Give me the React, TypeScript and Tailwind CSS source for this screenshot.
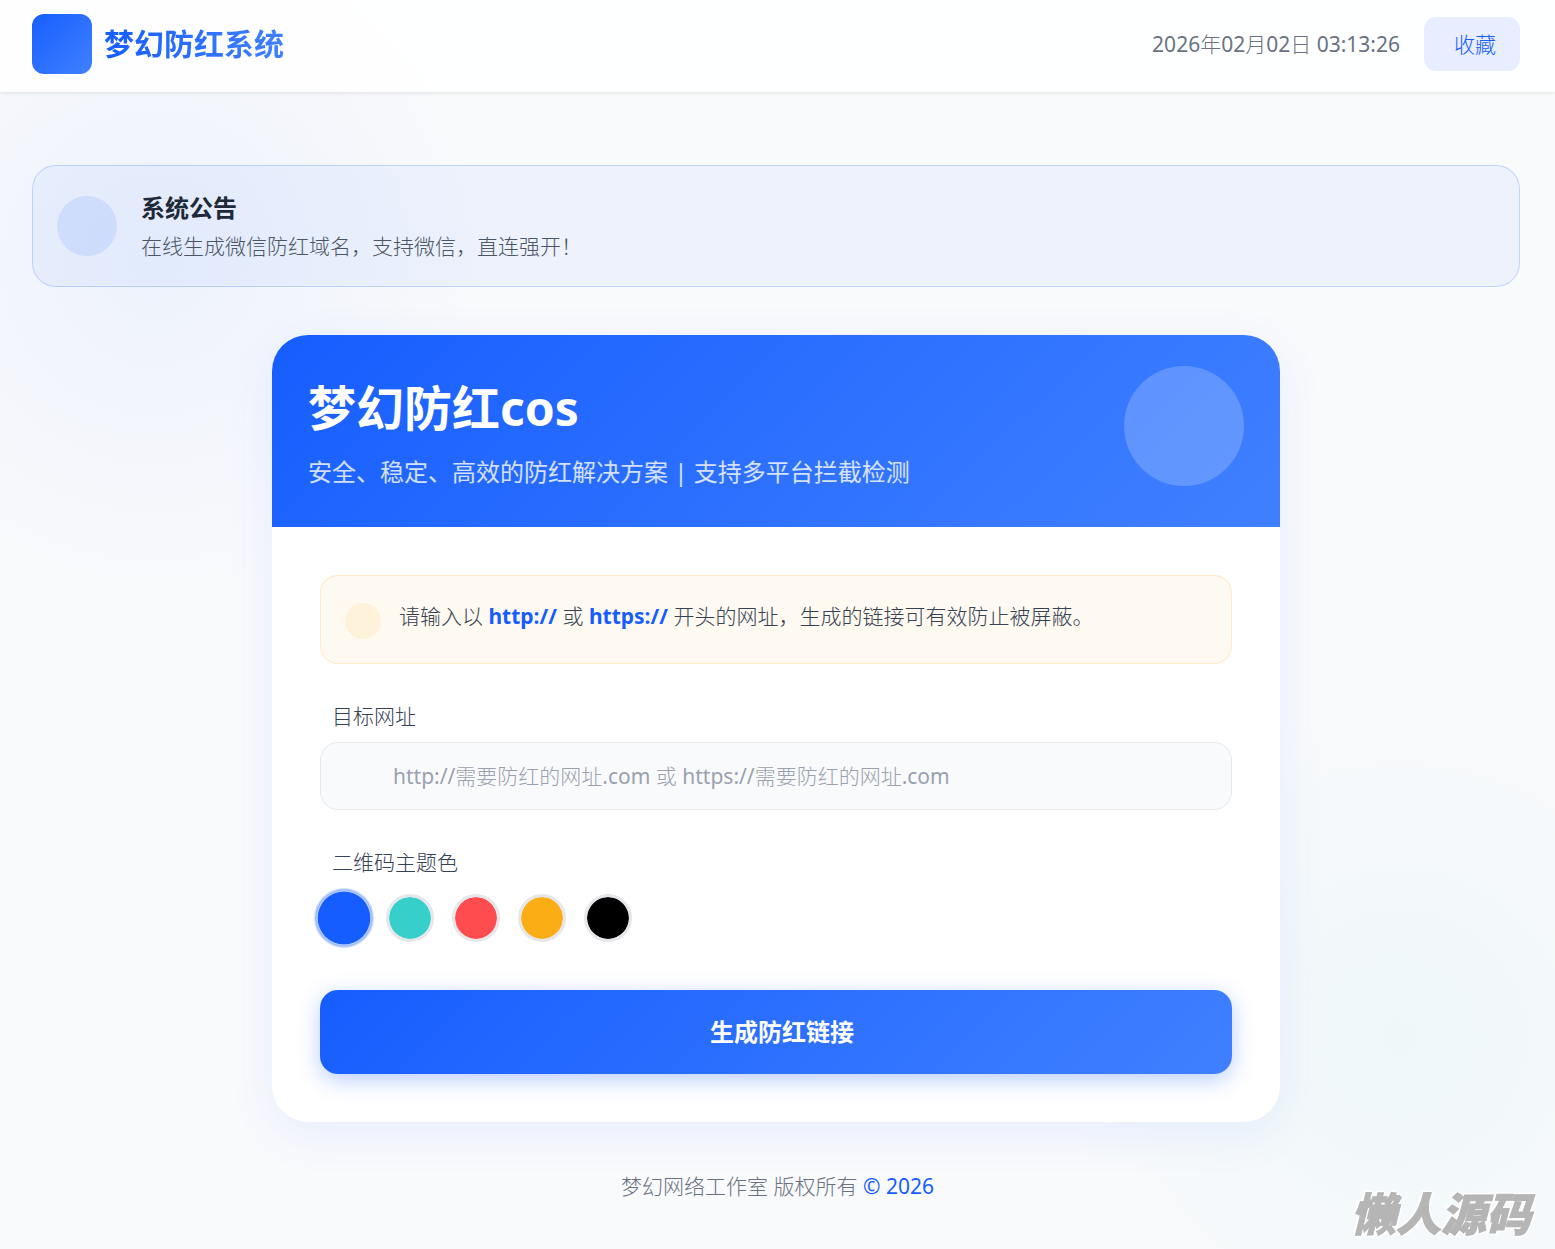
import React, { useState } from "react";
import { clsx } from "clsx";

interface ThemeColor {
  value: string;
  label: string;
  fill: string;
}

const themeColors: ThemeColor[] = [
  { value: "#165DFF", label: "蓝色", fill: "bg-[#165dff]" },
  { value: "#36CFC9", label: "青色", fill: "bg-[#36cfc9]" },
  { value: "#FF4D4F", label: "红色", fill: "bg-[#ff4d4f]" },
  { value: "#FAAD14", label: "橙色", fill: "bg-[#faad14]" },
  { value: "#000000", label: "黑色", fill: "bg-black" },
];

// Headings use the regular CJK family, body copy inherits the light one from the root
const headingFont = "font-['Noto_Sans','Noto_Sans_CJK_SC',sans-serif]";

const Header: React.FC = () => (
  <header className="bg-white/90 shadow-[0_1px_4px_rgba(0,0,0,0.1)]">
    <div className="flex items-center justify-between pt-[14px] pr-[35px] pb-[18px] pl-8">
      <div className="flex items-center gap-3">
        <div className="size-[60px] rounded-xl bg-linear-135 from-[#165dff] to-[#4080ff]" />
        <span
          className={clsx(
            headingFont,
            "bg-linear-to-r from-[#165dff] to-[#4080ff] bg-clip-text text-[30px] leading-9 font-bold text-transparent"
          )}
        >
          梦幻防红系统
        </span>
      </div>
      <div className="flex items-center gap-6">
        <time className="text-gray-500">2026年02月02日 03:13:26</time>
        <button type="button" className="h-[54px] rounded-xl bg-[#e8eeff] pr-6 pl-[30px] text-[#165dff]">
          收藏
        </button>
      </div>
    </div>
  </header>
);

const Notice: React.FC = () => (
  <section className="flex items-center gap-6 rounded-3xl border border-[#165dff]/20 bg-[#165dff]/5 p-6">
    <div className="size-[60px] shrink-0 rounded-full bg-[#165dff]/10" />
    <div>
      <h2 className={clsx(headingFont, "text-2xl leading-9 font-semibold text-gray-800")}>系统公告</h2>
      <p className="mt-1 text-gray-600">在线生成微信防红域名，支持微信，直连强开！</p>
    </div>
  </section>
);

const LinkForm: React.FC = () => {
  const [url, setUrl] = useState("");
  const [color, setColor] = useState(themeColors[0].value);

  return (
    <form className="p-12" onSubmit={(e) => e.preventDefault()}>
      <div className="flex items-start gap-[18px] rounded-[18px] border border-[#faad14]/20 bg-[#fffaf1] p-6">
        <div className="mt-[3px] size-9 shrink-0 rounded-full bg-[#fff2da]" />
        <p className="text-gray-700">
          请输入以 <strong className="font-bold text-[#165dff]">http://</strong> 或{" "}
          <strong className="font-bold text-[#165dff]">https://</strong> 开头的网址，生成的链接可有效防止被屏蔽。
        </p>
      </div>

      <label htmlFor="url" className="mt-9 mb-[10px] block pl-3 text-gray-700">
        目标网址
      </label>
      <input
        id="url"
        type="text"
        value={url}
        onChange={(e) => setUrl(e.target.value)}
        placeholder="http://需要防红的网址.com 或 https://需要防红的网址.com"
        className="block h-[68px] w-full rounded-[18px] border border-gray-200 bg-[#f9fafc] pr-6 pl-[72px] text-gray-700 outline-none placeholder:text-gray-400"
      />

      <fieldset className="mt-9">
        <legend className="mb-4 pl-3 text-gray-700">二维码主题色</legend>
        <div className="flex gap-[18px]">
          {themeColors.map((item) => (
            <input
              key={item.value}
              type="radio"
              name="color"
              value={item.value}
              aria-label={item.label}
              checked={color === item.value}
              onChange={() => setColor(item.value)}
              className={clsx(
                "size-12 cursor-pointer appearance-none rounded-full bg-clip-padding",
                item.fill,
                color === item.value
                  ? "scale-120 border-2 border-[#165dff]/30 ring-1 ring-[#165dff]/20"
                  : "border-3 border-gray-200"
              )}
            />
          ))}
        </div>
      </fieldset>

      <button
        type="submit"
        className={clsx(
          headingFont,
          "mt-12 h-[84px] w-full rounded-[18px] bg-linear-135 from-[#165dff] to-[#4080ff] pl-3 text-2xl font-bold text-white shadow-[0_6px_22px_rgba(22,93,255,0.3)]"
        )}
      >
        生成防红链接
      </button>
    </form>
  );
};

const App: React.FC = () => (
  <div
    lang="zh-CN"
    className="relative min-h-screen overflow-hidden bg-[#f9fafc] bg-[radial-gradient(circle_at_10%_21%,rgba(22,93,255,0.05)_0%,transparent_20%),radial-gradient(circle_at_90%_83%,rgba(54,207,201,0.05)_0%,transparent_20%)] font-['Noto_Sans','Noto_Sans_CJK_SC_Light','Noto_Sans_CJK_SC',sans-serif] text-[21px] leading-8"
  >
    <Header />
    <main className="pt-[73px] pr-[35px] pl-8">
      <Notice />
      <div className="mx-auto mt-12 max-w-[1008px] overflow-hidden rounded-[36px] bg-white shadow-[0_12px_48px_rgba(22,93,255,0.08)]">
        <div className="flex items-start justify-between bg-linear-135 from-[#165dff] to-[#4080ff] px-9 pt-[31px] pb-[37px]">
          <div className={clsx(headingFont, "pt-[6px] text-white")}>
            <h1 className="text-5xl leading-[72px] font-bold">梦幻防红cos</h1>
            <p className="mt-[10px] text-2xl leading-9 text-white/80">
              安全、稳定、高效的防红解决方案 | 支持多平台拦截检测
            </p>
          </div>
          <div className="size-[120px] shrink-0 rounded-full bg-white/20" />
        </div>
        <LinkForm />
      </div>
    </main>
    <footer className="mt-12 pb-12 text-center text-gray-500">
      梦幻网络工作室 版权所有{" "}
      <a href="#" className="text-[#165dff]">
        © 2026
      </a>
    </footer>
    <span className="absolute right-6 bottom-2 font-['Noto_Sans_CJK_SC_Black','Noto_Sans_CJK_SC',sans-serif] text-[45px] leading-[60px] font-black text-[#b5b5b5] italic [-webkit-text-stroke:1px_#b5b5b5] [filter:drop-shadow(1px_1px_0_white)_drop-shadow(-1px_-1px_0_white)_drop-shadow(0_0_1px_white)]">
      懒人源码
    </span>
  </div>
);

export default App;
